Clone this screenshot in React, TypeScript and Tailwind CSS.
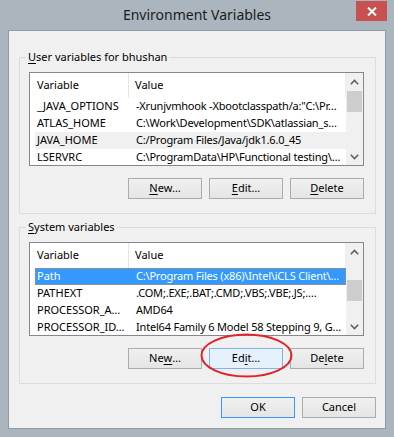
import React from "react";

type Row = { name: string; value: string; state?: "sel" | "hover" };

const userRows: Row[] = [
  { name: "_JAVA_OPTIONS", value: "-Xrunjvmhook -Xbootclasspath/a:\"C:\\Pr…" },
  { name: "ATLAS_HOME", value: "C:\\Work\\Development\\SDK\\atlassian_s…" },
  { name: "JAVA_HOME", value: "C:/Program Files/Java/jdk1.6.0_45", state: "hover" },
  { name: "LSERVRC", value: "C:\\ProgramData\\HP\\Functional testing\\…" },
];

const sysRows: Row[] = [
  { name: "Path", value: "C:\\Program Files (x86)\\Intel\\iCLS Client\\…", state: "sel" },
  { name: "PATHEXT", value: ".COM;.EXE;.BAT;.CMD;.VBS;.VBE;.JS;.…" },
  { name: "PROCESSOR_A…", value: "AMD64" },
  { name: "PROCESSOR_ID…", value: "Intel64 Family 6 Model 58 Stepping 9, G…" },
];

function Chevron({ up }: { up?: boolean }) {
  return (
    <svg width="9" height="6" viewBox="0 0 9 6" className="block">
      {up ? (
        <path d="M0.8 5.2 L4.5 1.5 L8.2 5.2" fill="none" stroke="#606060" strokeWidth="1.6" />
      ) : (
        <path d="M0.8 0.8 L4.5 4.5 L8.2 0.8" fill="none" stroke="#606060" strokeWidth="1.6" />
      )}
    </svg>
  );
}

function ListView({ rows, thumbTop }: { rows: Row[]; thumbTop: number }) {
  return (
    <div className="h-[94px] w-full border border-[#828790] bg-white flex overflow-hidden">
      <div className="flex-1 min-w-0 pl-[5px] flex flex-col">
        <div className="h-[25px] flex shrink-0">
          <div className="w-[94px] border-r border-[#e5e5e5] pl-[2px] flex items-center">Variable</div>
          <div className="flex-1 pl-[6px] flex items-center border-r border-[#e8eef5]">Value</div>
        </div>
        {rows.map((r) => (
          <div
            key={r.name}
            className={
              "h-[17px] shrink-0 flex items-center whitespace-nowrap overflow-hidden " +
              (r.state === "sel"
                ? "bg-[#3399ff] text-white outline outline-1 outline-dotted outline-[#e08a30] -outline-offset-1"
                : r.state === "hover"
                ? "bg-[#f0f0f0]"
                : "")
            }
          >
            <div className="w-[95px] shrink-0 pl-[2px] overflow-hidden">{r.name}</div>
            <div className="flex-1 min-w-0 pl-[6px] overflow-hidden tracking-[-0.2px]">{r.value}</div>
          </div>
        ))}
      </div>
      <div className="w-[17px] shrink-0 bg-[#f0f0f0] flex flex-col items-center">
        <div className="h-[17px] flex items-center justify-center w-full">
          <Chevron up />
        </div>
        <div className="w-full px-[1px]" style={{ marginTop: thumbTop }}>
          <div className="h-[21px] bg-[#cdcdcd]" />
        </div>
        <div className="flex-1" />
        <div className="h-[17px] flex items-center justify-center w-full">
          <Chevron />
        </div>
      </div>
    </div>
  );
}

function Btn({
  children,
  variant,
}: {
  children: React.ReactNode;
  variant?: "hot" | "default";
}) {
  const cls =
    variant === "hot"
      ? "bg-[#e5f1fb] border-[#7eb4ea]"
      : variant === "default"
      ? "bg-gradient-to-b from-[#f0f0f0] to-[#e5e5e5] border-[#3399ff]"
      : "bg-gradient-to-b from-[#f0f0f0] to-[#e5e5e5] border-[#acacac]";
  return (
    <div className={"w-[74px] h-[21px] border flex items-center justify-center text-black " + cls}>
      {children}
    </div>
  );
}

function Group({
  label,
  rows,
  thumbTop,
  buttons,
  mt,
}: {
  label: React.ReactNode;
  rows: Row[];
  thumbTop: number;
  buttons: React.ReactNode;
  mt: string;
}) {
  return (
    <div className={"relative border border-[#dcdcdc] pt-[14px] pl-[9px] pr-[11px] pb-[14px] " + mt}>
      <div className="absolute left-[6px] -top-[9px] bg-[#f0f0f0] px-[2px] leading-[16px]">{label}</div>
      <ListView rows={rows} thumbTop={thumbTop} />
      <div className="flex justify-end gap-[7px] mt-[12px]">{buttons}</div>
    </div>
  );
}

export default function App() {
  return (
    <div className="relative w-[394px] h-[437px] bg-[#aab5bd] flex flex-col font-['Noto_Sans',sans-serif] text-[11px] text-black select-none">
      <div className="h-[30px] shrink-0 relative flex items-center justify-center">
        <span className="text-[14px] text-[#1b1b1b] -mt-[1px]">Environment Variables</span>
        <div className="absolute left-[356px] top-[1px] w-[31px] h-[20px] bg-[#c75050] flex items-center justify-center">
          <svg width="10" height="9" viewBox="0 0 10 9">
            <path d="M1 0.5 L9 8.5 M9 0.5 L1 8.5" stroke="white" strokeWidth="2" />
          </svg>
        </div>
      </div>
      <div className="mx-[8px] mb-[8px] flex-1 bg-[#f0f0f0] border border-[#8e9ba5] pt-[26px] pl-[10px] pr-[9px] flex flex-col">
        <Group
          mt=""
          label={
            <>
              <span className="underline underline-offset-2">U</span>ser variables for bhushan
            </>
          }
          rows={userRows}
          thumbTop={1}
          buttons={
            <>
              <Btn>
                <span className="underline underline-offset-2">N</span>ew…
              </Btn>
              <Btn>
                <span className="underline underline-offset-2">E</span>dit…
              </Btn>
              <Btn>
                <span className="underline underline-offset-2">D</span>elete
              </Btn>
            </>
          }
        />
        <Group
          mt="mt-[13px]"
          label={
            <>
              <span className="underline underline-offset-2">S</span>ystem variables
            </>
          }
          rows={sysRows}
          thumbTop={20}
          buttons={
            <>
              <Btn>
                Ne<span className="underline underline-offset-2">w</span>…
              </Btn>
              <Btn variant="hot">
                Ed<span className="underline underline-offset-2">i</span>t…
              </Btn>
              <Btn>
                De<span className="underline underline-offset-2">l</span>ete
              </Btn>
            </>
          }
        />
        <div className="flex justify-end gap-[7px] mt-[13px]">
          <Btn variant="default">OK</Btn>
          <Btn>Cancel</Btn>
        </div>
      </div>
      <svg className="absolute left-[200px] top-[333px]" width="93" height="45" viewBox="0 0 93 45">
        <ellipse cx="46.5" cy="22.5" rx="45" ry="21" fill="none" stroke="#e2222a" strokeWidth="2" />
      </svg>
    </div>
  );
}
